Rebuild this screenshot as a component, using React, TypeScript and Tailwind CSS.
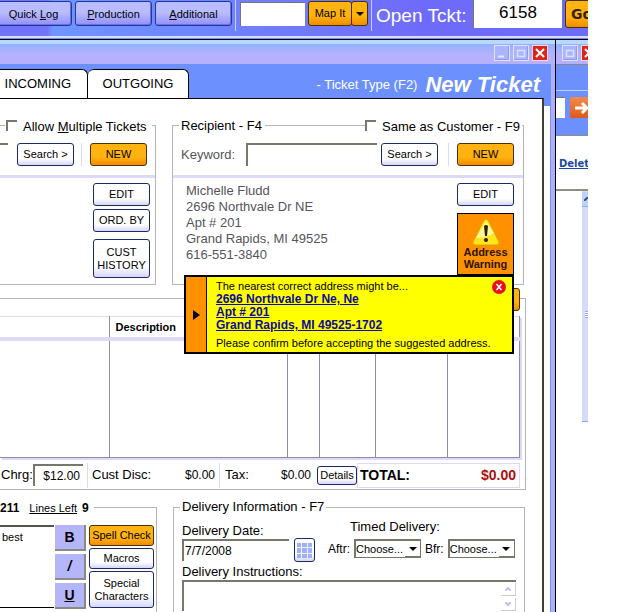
import type { ReactNode } from "react";

const blueButton =
  "shrink-0 rounded-[3px] border border-[#1b2a63] bg-linear-to-b from-white from-70% to-[#d5d6fb] text-center text-[11px] leading-[13px] text-black";
const orangeButton =
  "shrink-0 rounded-[3px] border border-[#4a3200] bg-linear-to-b from-[#ffb310] from-60% to-[#f08c00] text-center text-[11px] leading-[13px] text-black";
const navButton =
  "h-[25px] shrink-0 rounded-[3px] border border-[#1c3a9c] bg-linear-to-b from-[#b9bcff] from-45% to-[#938ff8] text-[11px] text-black shadow-[inset_-1px_-1px_0_#6f6de0]";
const sunken = "border-t-2 border-l-2 border-[#77776a] bg-white";
const rule = "h-[3px] shrink-0 bg-[#dcd9fa]";

function Check({ id, children }: { id: string; children: ReactNode }) {
  return (
    <div className="flex items-center">
      <input
        id={id}
        type="checkbox"
        className="size-[11px] appearance-none border-t-2 border-l-2 border-[#77776a] bg-white"
      />
      <label htmlFor={id} className="pt-[2px] pl-[6px] whitespace-nowrap">
        {children}
      </label>
    </div>
  );
}

function WindowIcon({ kind }: { kind: "min" | "max" }) {
  return (
    <span className="flex size-[16px] shrink-0 items-center justify-center border border-[#e3e1ff] bg-[#aab5fb] shadow-[inset_-1px_-1px_0_#8b9df0]">
      <svg viewBox="0 0 12 12" className="size-[12px]" fill="none">
        {kind === "min" ? (
          <path d="M2 9.5h6" stroke="#e9e8ff" strokeWidth="2" />
        ) : (
          <path d="M2 3.5h8M2.500 3v6.500h7V3" stroke="#dfe0ff" strokeWidth="1.500" />
        )}
      </svg>
    </span>
  );
}

function CloseIcon() {
  return (
    <svg viewBox="0 0 16 16" className="size-[16px] shrink-0">
      <rect width="16" height="16" fill="#f4d6e4" />
      <rect x="1" y="1" width="14" height="14" fill="#dd2418" />
      <path d="M4 4l8 8M12 4l-8 8" stroke="#fff" strokeWidth="2" />
    </svg>
  );
}

function TopBar() {
  return (
    <header className="flex h-[36px] shrink-0 items-start overflow-hidden bg-linear-to-r from-[#7273fb] from-8% via-[#6f95ff] via-9% to-[#6f6bfa] to-72%">
      <nav className="flex shrink-0 gap-[3px] pt-px">
        <button className={`${navButton} -ml-[5px] w-[77px]`}>
          Quick <u>L</u>og
        </button>
        <button className={`${navButton} w-[77px]`}>
          <u>P</u>roduction
        </button>
        <button className={`${navButton} w-[77px]`}>
          <u>A</u>dditional
        </button>
      </nav>
      <div className="ml-[3px] h-[31px] w-px shrink-0 bg-[#c4d0ff]" />
      <input
        aria-label="Map address"
        className="mt-[2px] ml-[4px] h-[24px] w-[65px] shrink-0 border-t border-l border-[#77776a] bg-white"
      />
      <button className={`${orangeButton} mt-px ml-[3px] h-[25px] w-[44px]`}>Map It</button>
      <button aria-label="Map options" className={`${orangeButton} mt-px -ml-px flex h-[25px] w-[17px] items-center justify-center`}>
        <svg viewBox="0 0 8 4" className="h-[4px] w-[8px]">
          <path d="M0 0h8L4 4z" />
        </svg>
      </button>
      <div className="ml-[3px] h-[31px] w-px shrink-0 bg-[#c4d0ff]" />
      <label htmlFor="ticket" className="ml-[4px] w-[97px] shrink-0 text-[19px] leading-[32px] whitespace-nowrap text-white">
        Open Tckt:
      </label>
      <input
        id="ticket"
        defaultValue="6158"
        className="h-[28px] w-[89px] shrink-0 border-l border-[#77776a] bg-white pb-[3px] text-center text-[17px] text-black"
      />
      <button className="ml-[3px] h-[28px] w-[44px] shrink-0 rounded-[3px] border border-[#4a3200] bg-linear-to-b from-[#ffb310] from-60% to-[#f08c00] pl-[5px] text-left font-['DejaVu_Sans'] text-[14px] font-bold text-[#3a2000]">
        Go
      </button>
    </header>
  );
}

function TitleArea() {
  return (
    <div className="flex h-[58px] shrink-0 flex-col">
      <div className="flex h-[24px] shrink-0 items-start justify-end gap-[3px] bg-linear-to-b from-[#b8d8ff] from-16% via-[#90b2ff] via-17% to-[#b5b1fd] to-58% pt-[5px] pr-[7px]">
        <WindowIcon kind="min" />
        <WindowIcon kind="max" />
        <CloseIcon />
      </div>
      <div className="flex flex-1 border-r-4 border-[#aeb0fd] bg-[#6c90fd]">
        <div className="flex items-end text-[13px]">
          <button className="h-[29px] w-[88px] rounded-tr-[6px] border-t border-r border-black bg-white pr-[16px] text-right">
            INCOMING
          </button>
          <button className="h-[29px] w-[101px] rounded-t-[6px] border-t border-r border-black bg-white">
            OUTGOING
          </button>
        </div>
        <div className="flex flex-1 items-center justify-end pt-[8px] pr-[11px] whitespace-nowrap text-white">
          <span className="text-[13px]">- Ticket Type (F2)</span>
          <h1 className="pl-[8px] text-[22px] leading-[24px] font-bold italic">New Ticket</h1>
        </div>
      </div>
    </div>
  );
}

function CustomerPanel() {
  return (
    <fieldset className="h-[168px] w-[156px] shrink-0 border border-l-0 border-[#b5b5b5]">
      <legend className="flex h-[17px] w-[152px] items-center bg-white">
        <span className="mr-px h-px w-[5px] bg-[#b5b5b5]" />
        <Check id="multi">
          Allow <u>M</u>ultiple Tickets
        </Check>
      </legend>
      <div className="flex h-[41px] items-start pt-[9px]">
        <input aria-label="Customer keyword" className="h-[23px] w-[8px] border-t-2 border-[#77776a]" />
        <button className={`${blueButton} ml-[9px] h-[23px] w-[57px]`}>Search &gt;</button>
        <div className="ml-[7px] h-[23px] w-px bg-[#dcd9fa]" />
        <button className={`${orangeButton} ml-[8px] h-[23px] w-[57px]`}>NEW</button>
      </div>
      <div className={rule} />
      <div className="flex flex-col items-end pt-[5px] pr-[5px]">
        <button className={`${blueButton} h-[23px] w-[57px]`}>EDIT</button>
        <button className={`${blueButton} mt-[3px] h-[23px] w-[57px]`}>ORD. BY</button>
        <button className={`${blueButton} mt-[7px] h-[39px] w-[57px]`}>CUST HISTORY</button>
      </div>
    </fieldset>
  );
}

function WarningIcon() {
  return (
    <svg viewBox="0 0 30 28" className="mx-auto h-[28px] w-[30px]">
      <path d="M17 2L28 24Q29 27 26 27H4Q1 27 2 24L13 2Q15 0 17 2Z" fill="#ffe51c" stroke="#d9a400" strokeWidth="1" />
      <path d="M15 3L5 20Q16 20 23 15Z" fill="#fff79a" />
      <path d="M13 8Q15 6 17 8L16 18H14Z" fill="#2b2100" />
      <circle cx="15" cy="22" r="2" fill="#2b2100" />
    </svg>
  );
}

function AddressPopup() {
  return (
    <div role="dialog" aria-label="Suggested address" className="absolute top-[141px] left-[11px] z-10 flex h-[79px] w-[330px] border-2 border-black bg-[#ffff00]">
      <div className="flex w-[21px] shrink-0 items-center justify-center border-r border-black bg-[#ff9100]">
        <svg viewBox="0 0 7 10" className="h-[10px] w-[7px]">
          <path d="M0 0l7 5-7 5z" />
        </svg>
      </div>
      <div className="flex-1 pl-[9px] text-[11px] whitespace-nowrap">
        <p className="pt-[2px] leading-[14px]">The nearest correct address might be...</p>
        <a href="#accept" className="block text-[12px] leading-[13px] font-bold text-[#0b0b9c] underline">
          2696 Northvale Dr Ne, Ne
          <br />
          Apt # 201
          <br />
          Grand Rapids, MI 49525-1702
        </a>
        <p className="pt-[4px] leading-[14px]">Please confirm before accepting the suggested address.</p>
      </div>
      <button aria-label="Close" className="absolute top-[3px] right-[6px]">
        <svg viewBox="0 0 14 14" className="size-[14px]">
          <circle cx="7" cy="7" r="7" fill="#e8101c" />
          <path d="M4.500 4l5 6M9.500 4l-5 6" stroke="#fff" strokeWidth="1.500" />
        </svg>
      </button>
    </div>
  );
}

function RecipientPanel() {
  return (
    <fieldset className="relative h-[168px] w-[352px] shrink-0 border border-[#b5b5b5]">
      <legend className="ml-[6px] flex h-[17px] w-[343px] items-center bg-white pr-[2px] pl-[2px]">
        <span className="whitespace-nowrap">Recipient - F4</span>
        <span className="ml-[3px] h-px flex-1 bg-[#b5b5b5]" />
        <Check id="same">Same as Customer - F9</Check>
      </legend>
      <div className="flex h-[41px] items-start pt-[9px] pl-[8px]">
        <label htmlFor="keyword" className="w-[65px] pt-[4px] text-[#55555a]">
          Keyword:
        </label>
        <input id="keyword" className={`${sunken} h-[23px] w-[131px]`} />
        <button className={`${blueButton} ml-[4px] h-[23px] w-[57px]`}>Search &gt;</button>
        <div className="ml-[10px] h-[23px] w-px bg-[#dcd9fa]" />
        <button className={`${orangeButton} ml-[8px] h-[23px] w-[57px]`}>NEW</button>
      </div>
      <div className={rule} />
      <div className="flex justify-between pt-[5px] pr-[9px] pl-[13px]">
        <address className="leading-[16px] text-[#55555a] not-italic">
          Michelle Fludd
          <br />
          2696 Northvale Dr NE
          <br />
          Apt # 201
          <br />
          Grand Rapids, MI 49525
          <br />
          616-551-3840
        </address>
        <div className="flex flex-col gap-[7px]">
          <button className={`${blueButton} h-[23px] w-[57px]`}>EDIT</button>
          <button className="h-[62px] w-[57px] border border-black bg-[#ff9100] text-[11px] leading-[12px] font-bold text-[#2b1400]">
            <WarningIcon />
            Address
            <br />
            Warning
          </button>
        </div>
      </div>
      <AddressPopup />
    </fieldset>
  );
}

function ItemsPanel() {
  const cell = "border-r border-[#8c8ca6]";
  return (
    <section className="mt-[13px] w-[526px] shrink-0 border border-l-0 border-[#b5b5b5]">
      <div className="-mt-[11px] flex h-[28px] justify-end pr-[5px]">
        <button aria-label="Add item" className={`${orangeButton} h-[23px] w-[40px]`} />
      </div>
      <table className="h-[142px] w-[519px] table-fixed border-collapse border border-l-0 border-[#8c8ca6] border-t-[#dcd9fa] shadow-[2px_2px_0_#dcd9fa]">
        <colgroup>
          <col className="w-[109px]" />
          <col className="w-[178px]" />
          <col className="w-[32px]" />
          <col className="w-[56px]" />
          <col className="w-[72px]" />
          <col className="w-[72px]" />
        </colgroup>
        <thead>
          <tr className="h-[22px] text-left text-[11px] leading-[16px]">
            <th className={`${cell} border-b-4 border-b-[#dcd9fa]`} />
            <th className={`${cell} border-b-4 border-b-[#dcd9fa] pl-[6px]`}>Description</th>
            <th className={`${cell} border-b-4 border-b-[#dcd9fa]`} />
            <th className={`${cell} border-b-4 border-b-[#dcd9fa]`} />
            <th className={`${cell} border-b-4 border-b-[#dcd9fa]`} />
            <th className={`${cell} border-b-4 border-b-[#dcd9fa]`} />
          </tr>
        </thead>
        <tbody>
          <tr>
            <td className={cell} />
            <td className={cell} />
            <td className={cell} />
            <td className={cell} />
            <td className={cell} />
            <td className={cell} />
          </tr>
        </tbody>
      </table>
      <div className="mt-[3px] flex h-[28px] items-center">
        <label htmlFor="charge" className="w-[33px] pl-px">
          Chrg:
        </label>
        <input id="charge" defaultValue="$12.00" className={`${sunken} h-[22px] w-[50px] pr-[3px] text-right text-[12px]`} />
        <div className="ml-[4px] h-[25px] w-px bg-[#dcd9fa]" />
        <span className="w-[93px] pl-[4px]">Cust Disc:</span>
        <span className="w-[35px] pl-[4px] text-[12px]">$0.00</span>
        <div className="ml-[3px] h-[25px] w-px bg-[#dcd9fa]" />
        <span className="w-[61px] pl-[5px]">Tax:</span>
        <span className="w-[36px] text-[12px]">$0.00</span>
        <button className={`${blueButton} h-[19px] w-[40px]`}>Details</button>
        <div className="flex h-[25px] w-[163px] items-center justify-between border border-[#dcd9fa] pr-[3px] pl-[2px] text-[14px] font-bold">
          <span>TOTAL:</span>
          <span className="text-[#b00d12]">$0.00</span>
        </div>
      </div>
    </section>
  );
}

function MessagePanel() {
  const fmt = "w-[31px] border-r-2 border-b-2 border-[#8a8a80] bg-[#b5b5fa] text-[14px] font-bold";
  return (
    <fieldset className="h-[130px] w-[157px] shrink-0 border border-b-0 border-l-0 border-[#b5b5b5]">
      <legend className="flex h-[18px] w-[94px] items-baseline gap-[10px] bg-white text-[12px] leading-[20px]">
        <b>211</b>
        <span className="flex items-baseline gap-[5px] whitespace-nowrap">
          <u className="text-[11px]">Lines Left</u>
          <b>9</b>
        </span>
      </legend>
      <div className="flex pt-[9px]">
        <textarea
          aria-label="Card message"
          defaultValue="best"
          className="h-[83px] w-[54px] resize-none border-t-2 border-b border-t-[#55554a] border-b-black p-[2px] text-[11px] leading-[16px]"
        />
        <div className="ml-px flex flex-col gap-[3px]">
          <button className={`${fmt} h-[26px]`}>B</button>
          <button className={`${fmt} h-[26px] italic`}>/</button>
          <button className={`${fmt} h-[26px] underline`}>U</button>
        </div>
        <div className="ml-[3px] flex flex-col gap-[2px]">
          <button className={`${orangeButton} h-[21px] w-[65px] whitespace-nowrap`}>Spell Check</button>
          <button className={`${blueButton} h-[21px] w-[65px]`}>Macros</button>
          <button className={`${blueButton} h-[37px] w-[65px]`}>Special Characters</button>
        </div>
      </div>
    </fieldset>
  );
}

function TimeSelect({ id, label }: { id: string; label: string }) {
  return (
    <>
      <label htmlFor={id} className="text-[12px]">
        {label}
      </label>
      <div className="relative">
        <select
          id={id}
          className="block h-[19px] w-[67px] appearance-none border border-t-2 border-l-2 border-[#77776a] bg-white text-[11px]"
        >
          <option>Choose...</option>
        </select>
        <span className="pointer-events-none absolute top-[2px] right-px flex h-[16px] w-[15px] items-center justify-center border-b border-[#77776a] bg-white">
          <svg viewBox="0 0 8 4" className="h-[4px] w-[8px]">
            <path d="M0 0h8L4 4z" />
          </svg>
        </span>
      </div>
    </>
  );
}

function ScrollArrow({ up }: { up?: boolean }) {
  return (
    <span className="flex h-[13px] w-[15px] items-center justify-center border-r border-b border-[#cfcfc4] bg-white">
      <svg viewBox="0 0 6 4" className="h-[4px] w-[6px]" fill="none">
        <path d={up ? "M0 4l3-3 3 3" : "M0 0l3 3 3-3"} stroke="#c4c0ee" strokeWidth="2" />
      </svg>
    </span>
  );
}

function DeliveryPanel() {
  return (
    <fieldset className="h-[130px] w-[352px] shrink-0 border border-b-0 border-[#b5b5b5]">
      <legend className="ml-[6px] bg-white px-[2px] leading-[18px]">Delivery Information - F7</legend>
      <div className="flex pl-[8px]">
        <div className="w-[112px] pt-[7px]">
          <label htmlFor="date" className="block leading-[16px]">
            Delivery Date:
          </label>
          <input id="date" defaultValue="7/7/2008" className={`${sunken} block h-[22px] w-[107px] pl-px text-[12px]`} />
        </div>
        <button
          aria-label="Pick a date"
          className={`${blueButton} mt-[22px] flex h-[24px] w-[21px] items-center justify-center`}
        >
          <svg viewBox="0 0 15 15" className="size-[15px]">
            <rect width="15" height="15" fill="#9fb0fa" />
            <path d="M0 4.500h15M0 10.500h15M4.500 0v15M10.500 0v15" stroke="#f4f6ff" strokeWidth="1" />
          </svg>
        </button>
        <div className="pl-[13px]">
          <p className="pt-[3px] pl-[22px] leading-[16px]">Timed Delivery:</p>
          <div className="flex items-center gap-[4px] pt-[4px]">
            <TimeSelect id="after" label="Aftr:" />
            <TimeSelect id="before" label="Bfr:" />
          </div>
        </div>
      </div>
      <label htmlFor="instructions" className="block pt-[2px] pl-[8px] leading-[16px]">
        Delivery Instructions:
      </label>
      <div className="flex px-[8px]">
        <textarea id="instructions" className={`${sunken} h-[31px] flex-1 resize-none`} />
        <div className="flex flex-col gap-[2px] border-t-2 border-[#77776a] pt-px">
          <ScrollArrow up />
          <ScrollArrow />
        </div>
      </div>
    </fieldset>
  );
}

function TicketWindow() {
  return (
    <main className="flex min-w-0 flex-1 flex-col border-r border-black">
      <TitleArea />
      <div className="flex flex-1 border-r-4 border-[#a9affc]">
        <div className="min-w-0 flex-1 border-t border-r-2 border-t-black border-r-[#3f3f38] pt-[18px]">
          <div className="flex gap-[16px]">
            <CustomerPanel />
            <RecipientPanel />
          </div>
          <ItemsPanel />
          <div className="mt-[8px] flex gap-[16px]">
            <MessagePanel />
            <DeliveryPanel />
          </div>
        </div>
        <div className="w-[7px] shrink-0 border-r border-[#7f90f8]">
          <div className="h-[8px] bg-[#6c90fd]" />
        </div>
      </div>
    </main>
  );
}

function BackgroundWindow() {
  return (
    <aside className="flex w-[32px] shrink-0 flex-col overflow-hidden">
      <div className="flex h-[24px] shrink-0 gap-[3px] bg-linear-to-b from-[#b8d8ff] from-16% via-[#90b2ff] via-17% to-[#b5b1fd] to-58% pt-[5px] pl-[6px]">
        <WindowIcon kind="max" />
        <CloseIcon />
      </div>
      <div className="h-[27px] shrink-0 border-t border-b border-t-[#88888c] border-b-[#c4d0ff] bg-[#6c90fd]" />
      <div className="flex h-[44px] shrink-0 gap-[5px] bg-[#6c90fd] pt-[6px]">
        <input aria-label="Search" className="h-[21px] w-[9px] shrink-0 border-t border-[#77776a] bg-white" />
        <button aria-label="Go" className="h-[21px] w-[24px] shrink-0 rounded-[2px] bg-linear-to-b from-[#f58a4a] to-[#dd5a18] pl-[4px]">
          <svg viewBox="0 0 16 14" className="h-[14px] w-[16px]" fill="none">
            <path d="M1 7h11M8 2l5 5-5 5" stroke="#fff" strokeWidth="3" />
          </svg>
        </button>
      </div>
      <div className="h-[56px] shrink-0 border-t border-b-2 border-[#8f8d84] pt-[19px] pl-[3px]">
        <a href="#delete" className="font-['DejaVu_Sans'] text-[10px] leading-[16px] font-bold text-[#1c4aa0] underline">
          Delete
        </a>
      </div>
      <div className="ml-auto flex h-[231px] w-[6px] shrink-0 flex-col overflow-hidden border-b border-[#8fa8dc] bg-[#d8dafb] pt-px">
        <div className="flex h-[15px] items-center justify-end border-b border-[#8fb4e8] bg-[#bcd2fb]">
          <svg viewBox="0 0 4 4" className="size-[4px]" fill="none">
            <path d="M0 4l4-4" stroke="#3c5088" strokeWidth="2" />
          </svg>
        </div>
        <div className="mt-[104px] ml-auto flex w-[3px] flex-col">
          <div className="h-px bg-[#98a8e8]" />
          <div className="h-px bg-white" />
          <div className="h-px bg-[#98a8e8]" />
          <div className="h-px bg-white" />
          <div className="h-px bg-[#98a8e8]" />
          <div className="h-px bg-white" />
          <div className="h-px bg-[#98a8e8]" />
        </div>
      </div>
    </aside>
  );
}

export default function App() {
  return (
    <div className="flex h-screen flex-col overflow-hidden bg-white pr-[52px] font-['Liberation_Sans',Arial,sans-serif] text-[13px] leading-[16px] text-black">
      <TopBar />
      <div className="h-[4px] shrink-0 border-t-2 border-b border-t-[#d8dcff] border-b-black bg-[#6c90fd]" />
      <div className="flex min-h-0 flex-1">
        <TicketWindow />
        <BackgroundWindow />
      </div>
    </div>
  );
}
